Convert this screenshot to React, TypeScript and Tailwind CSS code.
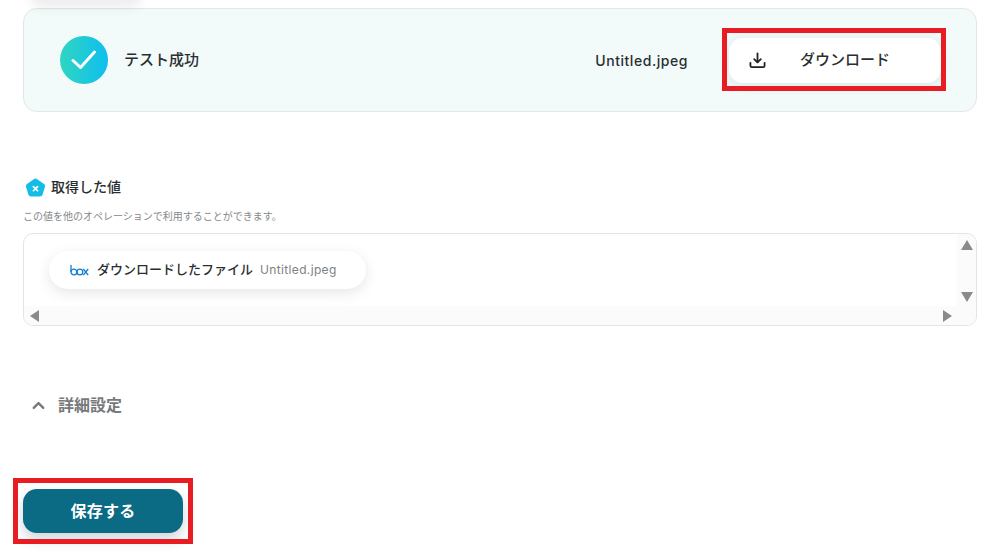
import { ChevronUp } from "lucide-react";

function DownloadIcon() {
  return (
    <svg width="17" height="17" viewBox="0 0 18 18" fill="none" stroke="#1f2326" strokeWidth="1.9" strokeLinecap="round" strokeLinejoin="round">
      <path d="M9 1.5V10.5" />
      <path d="M5.5 7.5L9 11L12.5 7.5" />
      <path d="M1.5 11.5V14.5Q1.5 16 3 16H15Q16.5 16 16.5 14.5V11.5" />
    </svg>
  );
}

function CheckBadge() {
  return (
    <div className="flex h-12 w-12 shrink-0 items-center justify-center rounded-full bg-gradient-to-r from-[#2fd6c0] to-[#10bdee]">
      <svg width="26" height="22" viewBox="0 0 26 22" fill="none" stroke="#fff" strokeWidth="3" strokeLinecap="round" strokeLinejoin="round">
        <path d="M2 11.5L9.5 18.5L23.5 3" />
      </svg>
    </div>
  );
}

function ValueBadge() {
  return (
    <svg width="21" height="20" viewBox="0 0 22 21" className="ml-[2px] mt-[4px]">
      <path d="M9.2 1.2Q11 0 12.8 1.2L20 6.2Q21.5 7.3 21 9.2L18.4 17.6Q17.8 19.5 15.8 19.5H6.2Q4.2 19.5 3.6 17.6L1 9.2Q0.5 7.3 2 6.2Z" fill="#14bde8" />
      <path d="M8.8 9L13.2 13.4M13.2 9L8.8 13.4" stroke="#fff" strokeWidth="1.8" strokeLinecap="round" />
    </svg>
  );
}

function BoxLogo() {
  return (
    <svg width="19" height="11" viewBox="0 0 19 11" fill="none" stroke="#0f7fd6" strokeWidth="1.3">
      <path d="M1 0V7" />
      <circle cx="3.9" cy="7" r="2.9" />
      <circle cx="9.9" cy="7" r="2.9" />
      <path d="M13.4 4L18.2 10.2M18.2 4L13.4 10.2" />
    </svg>
  );
}

export default function App() {
  return (
    <div
      className="relative h-[552px] w-full overflow-hidden bg-white pl-[23px] pr-[28px] pt-[8px] text-[#2a2e31]"
      style={{ fontFamily: 'Inter, "Noto Sans CJK JP", sans-serif' }}
    >
      {/* bit of shadow left over from the card scrolled above */}
      <div className="absolute left-[36px] top-[-12px] h-[12px] w-[100px] rounded-full shadow-[0_2px_12px_6px_rgba(0,0,0,0.07)]" />

      <div className="flex h-[104px] items-center rounded-[14px] border border-[#e2e6e6] bg-[#f2fafa] pl-[36px] pr-[35px]">
        <CheckBadge />
        <div className="ml-4 text-[15px] font-medium">テスト成功</div>
        <div className="ml-auto mr-[41px] text-[14px] font-medium tracking-[0.55px]">Untitled.jpeg</div>
        <div className="relative flex h-[45px] w-[212px] items-center rounded-[14px] bg-white pl-[20px] shadow-[0_2px_12px_rgba(40,70,80,0.12)]">
          <DownloadIcon />
          <div className="ml-[34px] text-[15px] font-medium">ダウンロード</div>
          <div className="absolute left-[-7px] top-[-10px] h-[63px] w-[224px] border-[5px] border-[#e81c23]" />
        </div>
      </div>

      <div className="mt-[63px] flex h-[22px] items-center">
        <ValueBadge />
        <div className="ml-[5px] text-[14px] font-medium">取得した値</div>
      </div>
      <div className="mt-[12px] text-[10px] leading-[14px] text-[#85898c]">この値を他のオペレーションで利用することができます。</div>

      <div className="mt-[10px] flex h-[93px] flex-col overflow-hidden rounded-[10px] border border-[#e2e4e5]">
        <div className="flex min-h-0 flex-1">
          <div className="flex-1 pl-[25px] pt-[17px]">
            <div className="flex h-[38px] w-[317px] items-center rounded-full bg-white pl-[21px] shadow-[0_4px_14px_rgba(0,0,0,0.1)]">
              <BoxLogo />
              <div className="ml-[8px] text-[13px] font-medium">ダウンロードしたファイル</div>
              <div className="ml-[7px] text-[12px] tracking-[0.35px] text-[#7d8184]">Untitled.jpeg</div>
            </div>
          </div>
          <div className="flex w-[19px] flex-col items-center justify-between bg-[#fbfbfb] pb-[4px] pt-[6px]">
            <div className="h-0 w-0 border-x-[6.5px] border-b-[10px] border-x-transparent border-b-[#8a8a8a]" />
            <div className="h-0 w-0 border-x-[6.5px] border-t-[10px] border-x-transparent border-t-[#8a8a8a]" />
          </div>
        </div>
        <div className="flex h-[19px] items-center justify-between bg-[#fbfbfb] pl-[6px] pr-[24px]">
          <div className="h-0 w-0 border-y-[6.5px] border-r-[9px] border-y-transparent border-r-[#8a8a8a]" />
          <div className="h-0 w-0 border-y-[6.5px] border-l-[9px] border-y-transparent border-l-[#8a8a8a]" />
        </div>
      </div>

      <div className="mt-[68px] flex h-[22px] items-center pl-[6px] text-[#77797b]">
        <ChevronUp size={19} strokeWidth={3} />
        <div className="ml-[10px] text-[16px] font-bold">詳細設定</div>
      </div>

      <div className="relative mt-[73px] flex h-[44px] w-[160px] items-center justify-center rounded-[14px] bg-[#0b6a84] shadow-[0_6px_14px_rgba(30,60,80,0.22)]">
        <div className="text-[16px] font-bold tracking-[0.3px] text-white">保存する</div>
        <div className="absolute left-[-10px] top-[-11px] h-[66px] w-[180px] border-[5px] border-[#e81c23]" />
      </div>
    </div>
  );
}
